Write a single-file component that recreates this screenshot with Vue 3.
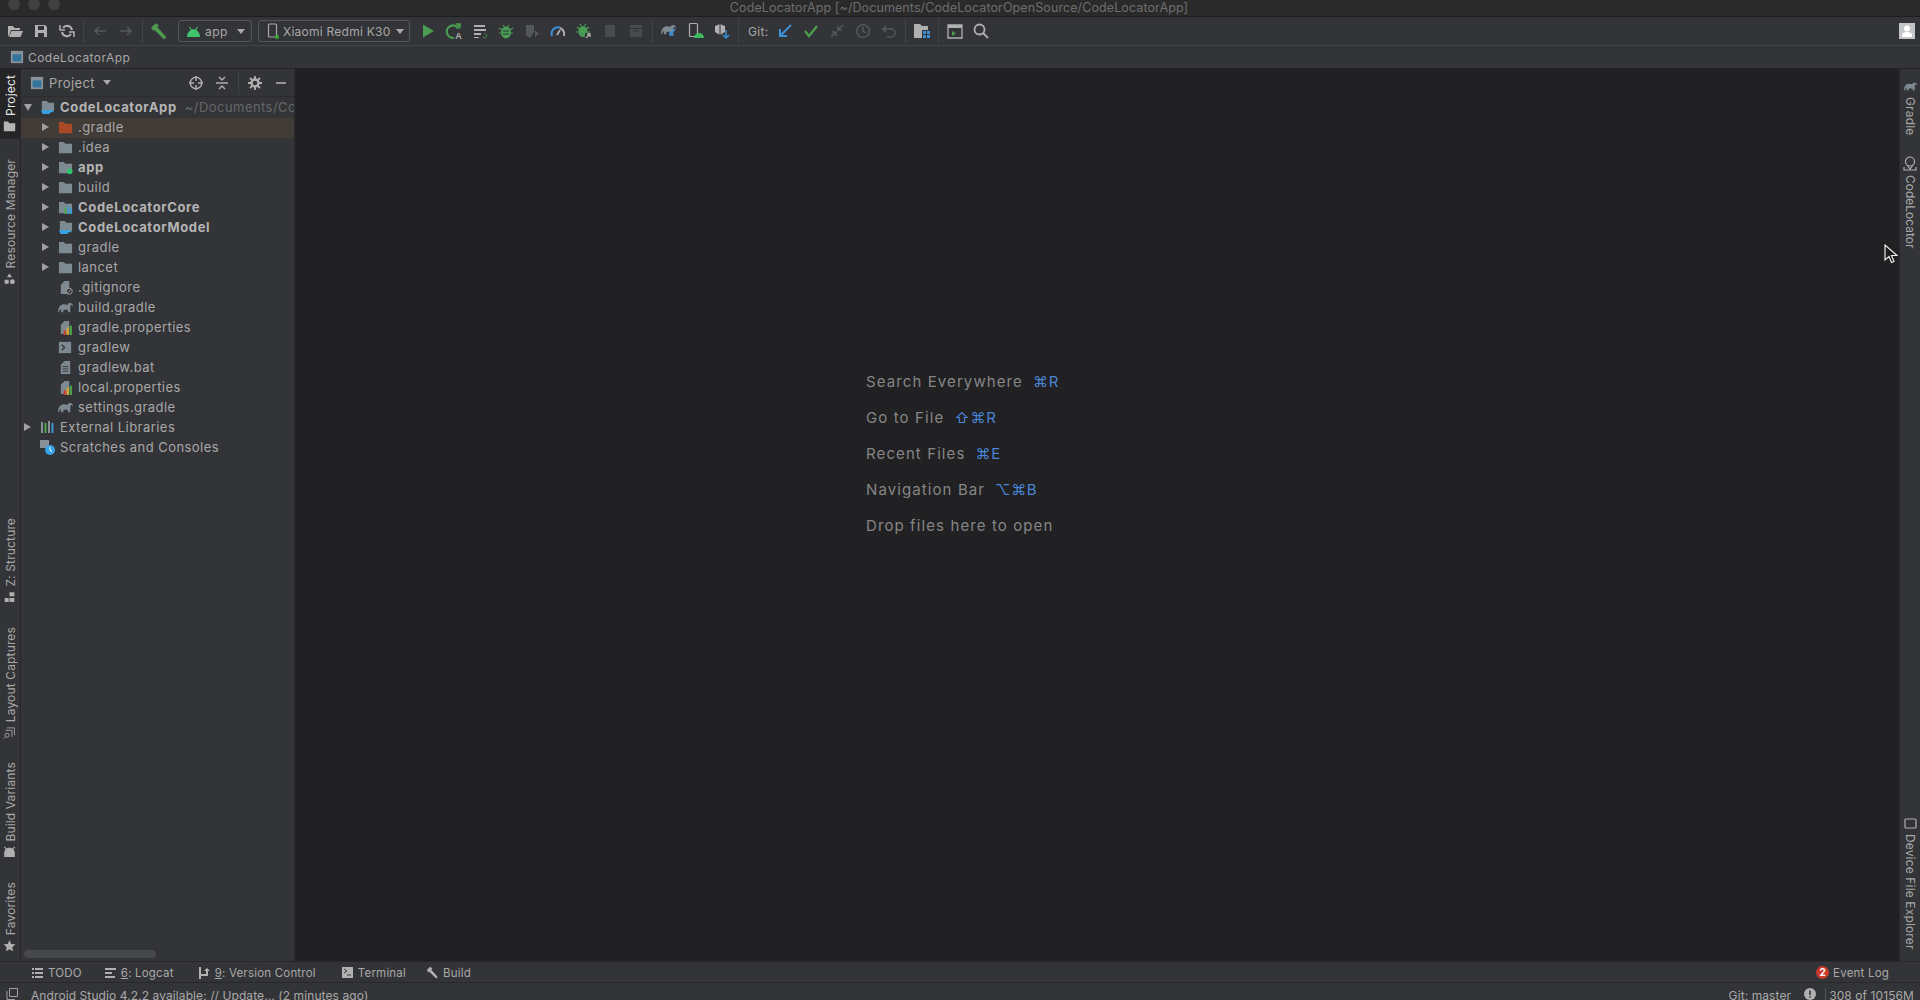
<script setup>
const tree = [
  { name: ".gradle", icon: "folder-red", arrow: true, selected: true },
  { name: ".idea", icon: "folder", arrow: true },
  { name: "app", icon: "folder-app", arrow: true, bold: true },
  { name: "build", icon: "folder", arrow: true },
  { name: "CodeLocatorCore", icon: "folder-bars", arrow: true, bold: true },
  { name: "CodeLocatorModel", icon: "folder-cup", arrow: true, bold: true },
  { name: "gradle", icon: "folder", arrow: true },
  { name: "lancet", icon: "folder", arrow: true },
  { name: ".gitignore", icon: "file-ignore" },
  { name: "build.gradle", icon: "elephant" },
  { name: "gradle.properties", icon: "file-bars" },
  { name: "gradlew", icon: "shell" },
  { name: "gradlew.bat", icon: "file-text" },
  { name: "local.properties", icon: "file-bars" },
  { name: "settings.gradle", icon: "elephant" },
];

const hints = [
  { label: "Search Everywhere", keys: "⌘R" },
  { label: "Go to File", keys: "⇧⌘R" },
  { label: "Recent Files", keys: "⌘E" },
  { label: "Navigation Bar", keys: "⌥⌘B" },
  { label: "Drop files here to open", keys: "" },
];

const leftTop = [
  { label: "Project", icon: "folder-plain", active: true },
  { label: "Resource Manager", icon: "shapes" },
];
const leftBottom = [
  { label: "Z: Structure", icon: "structure" },
  { label: "Layout Captures", icon: "captures" },
  { label: "Build Variants", icon: "android-side" },
  { label: "Favorites", icon: "star" },
];
</script>

<template>
  <div class="ide">
    <!-- icon sheet -->
    <svg class="sheet" width="0" height="0">
      <symbol id="folder" viewBox="0 0 16 16"><path d="M1 2h5l2 2h7v10H1z" fill="#7e8a92" /></symbol>
      <symbol id="folder-plain" viewBox="0 0 16 16"><path d="M1 2h5l2 2h7v10H1z" fill="#b5b5b5" /></symbol>
      <symbol id="folder-red" viewBox="0 0 16 16"><path d="M1 2h5l2 2h7v10H1z" fill="#a84a28" /></symbol>
      <symbol id="folder-app" viewBox="0 0 16 16"><path d="M1 2h5l2 2h7v10H1z" fill="#7e8a92" /><circle cx="12.500" cy="12" r="3" fill="#2fc46c" /></symbol>
      <symbol id="folder-bars" viewBox="0 0 16 16"><path d="M1 2h5l2 2h7v10H1z" fill="#7e8a92" /><path d="M7 8h2v7H7z" fill="#4fa84a" /><path d="M10 6h2v9h-2z" fill="#3d9ad6" /><path d="M13 9h2v6h-2z" fill="#3d9ad6" /></symbol>
      <symbol id="folder-cup" viewBox="0 0 16 16"><path d="M2 1h5l2 2h6v9H2z" fill="#7e8a92" /><path d="M1 11h10v2a2 2 0 0 1-2 2H4a2 2 0 0 1-2-2zM11 11h3v2h-3z" fill="#35a4e6" /></symbol>
      <symbol id="file-ignore" viewBox="0 0 16 16"><path d="M3 5l4-4h5v14H3z" fill="#7e8a92" /><circle cx="12" cy="12" r="3.200" fill="#333437" stroke="#a0a4a8" /><path d="M10 14l4-4" stroke="#a0a4a8" /></symbol>
      <symbol id="file-bars" viewBox="0 0 16 16"><path d="M3 5l4-4h5v14H3z" fill="#7e8a92" /><path d="M6 11h2.400v5H6z" fill="#c9402c" /><path d="M9.200 8h2.400v8H9.200z" fill="#d9a52c" /><path d="M12.400 6h2.400v10h-2.400z" fill="#4fa84a" /></symbol>
      <symbol id="file-text" viewBox="0 0 16 16"><path d="M3 5l4-4h6v14H3z" fill="#7e8a92" /><path d="M5 7h6M5 9.500h6M5 12h6" stroke="#333437" /></symbol>
      <symbol id="shell" viewBox="0 0 16 16"><path d="M1 2h13v12H1z" fill="#7e8a92" /><path d="M4 5l3 3-3 3" fill="none" stroke="#333437" stroke-width="1.400" /></symbol>
      <symbol id="elephant" viewBox="0 0 16 16"><path d="M0 12.500C0 9 1.500 6 4 5c2-.8 4-.6 6 .2 .8-1.700 2.500-2.400 4-1.700 1.500.6 2 1.800 2 2.700-.8 0-1.200-.8-1.700-.8-.6 0-1 .6-1 1.300L13 13h-2.200l-.5-2.500H6L5.500 13H3.300l-.2-3.500C2 10 1.500 11 1.500 12.500z" fill="#7e8a92" /></symbol>
      <symbol id="android-side" viewBox="0 0 16 16"><path d="M2 1l2.500 2.500C5 3.200 6.400 2.800 8 2.800s3 .4 3.500.7L14 1l1 1-2.300 2.500C14 6 14.500 7.800 14.500 9v5h-13V9c0-1.200.5-3 1.800-4.500L1 2z" fill="#b0b0b0" /></symbol>
      <symbol id="shapes" viewBox="0 0 16 16"><path d="M8 1l3 5H5z" fill="#b0b0b0" /><path d="M2 9h5v5H2z" fill="#b0b0b0" /><circle cx="11.500" cy="11.500" r="3" fill="#b0b0b0" /></symbol>
      <symbol id="structure" viewBox="0 0 16 16"><path d="M8 2h6v5H8zM2 9h5v5H2zM8 9h6v5H8z" fill="#b0b0b0" /></symbol>
      <symbol id="captures" viewBox="0 0 16 16"><path d="M5 2h9v9M3 5h8v8" fill="none" stroke="#b0b0b0" /><circle cx="5" cy="11" r="2.500" fill="#333437" stroke="#b0b0b0" /><path d="M3 13l-2 2" stroke="#b0b0b0" /></symbol>
      <symbol id="star" viewBox="0 0 16 16"><path d="M8 1l2.100 4.800 5.200.5-3.900 3.500 1.100 5.100L8 12.300l-4.500 2.600 1.100-5.100L.7 6.300l5.200-.5z" fill="#b0b0b0" /></symbol>
      <symbol id="module" viewBox="0 0 16 16"><path d="M1 1h14v14H1z" fill="#8a9299" /><path d="M3 5h10v8H3z" fill="#31739c" /></symbol>
    </svg>

    <div class="titlebar">
      <span class="lights"><i></i><i></i><i></i></span>
      <span class="title">CodeLocatorApp [~/Documents/CodeLocatorOpenSource/CodeLocatorApp]</span>
    </div>

    <div class="toolbar">
      <span class="tool"><svg width="16" height="16" viewBox="0 0 16 16"><path d="M1 3h5l1.500 2H13v2H4l-2 6H1zM4.500 8H16l-2.500 6H2z" fill="#b0b0b0" /></svg></span>
      <span class="tool"><svg width="16" height="16" viewBox="0 0 16 16"><path d="M2 2h10l2 2v10H2z" fill="#b0b0b0" /><path d="M5 3h6v4H5zM5 10h6v4H5z" fill="#333437" /></svg></span>
      <span class="tool"><svg width="16" height="16" viewBox="0 0 16 16" fill="none" stroke="#b0b0b0" stroke-width="2"><path d="M13 7a5 5 0 0 0-9-2M3 9a5 5 0 0 0 9 2" /><path d="M1 2v5h5M15 14V9h-5" stroke-width="1.500" /></svg></span>
      <span class="sep"></span>
      <span class="tool"><svg width="16" height="16" viewBox="0 0 16 16" fill="none" stroke="#55575a" stroke-width="1.500"><path d="M14 8H3M7 4L3 8l4 4" /></svg></span>
      <span class="tool"><svg width="16" height="16" viewBox="0 0 16 16" fill="none" stroke="#55575a" stroke-width="1.500"><path d="M2 8h11M9 4l4 4-4 4" /></svg></span>
      <span class="sep"></span>
      <span class="tool"><svg width="18" height="18" viewBox="0 0 16 16"><path d="M1 5l4-4 3 2-1.500 1.500 8 9-2 2-8.500-8.500L3 8z" fill="#4e9a4e" /></svg></span>
      <span class="combo combo-app">
        <svg width="15" height="12" viewBox="0 0 15 12"><path d="M1 12c0-3.500 2-6 3.800-7L3 2l.8-.5L5.700 4.500c1.200-.5 2.400-.5 3.600 0L11.200 1.500l.8.5-1.800 3C12 6 14 8.500 14 12z" fill="#3fc46c" /></svg>
        app <i class="caret"></i>
      </span>
      <span class="combo combo-device">
        <svg width="14" height="16" viewBox="0 0 14 16"><rect x="2.500" y="1" width="8" height="13" rx="1" fill="none" stroke="#a8a8a8" stroke-width="1.200" /><circle cx="11" cy="14" r="2" fill="#3aa53a" /></svg>
        Xiaomi Redmi K30 <i class="caret"></i>
      </span>
      <span class="tool first"><svg width="16" height="16" viewBox="0 0 16 16"><path d="M3 1.500l11 6.500-11 6.500z" fill="#4b9c50" /></svg></span>
      <span class="tool"><svg width="18" height="18" viewBox="0 0 16 16"><path d="M12 6a5.500 5.500 0 1 0-4 8" fill="none" stroke="#4b9c50" stroke-width="2" /><path d="M9 1h5v5z" fill="#4b9c50" /><text x="9" y="15" font-size="8" font-weight="700" fill="#b0b0b0" font-family="Liberation Sans">A</text></svg></span>
      <span class="tool"><svg width="16" height="16" viewBox="0 0 16 16"><path d="M2 2h11v2H2zM2 6h12v2H2zM2 10h7v2H2zM2 14h5v1H2z" fill="#b0b0b0" /><path d="M11 14a2 2 0 1 0 2-3" fill="none" stroke="#4b9c50" /></svg></span>
      <span class="tool"><svg width="16" height="16" viewBox="0 0 16 16"><ellipse cx="8" cy="9.500" rx="5" ry="6" fill="#499c54" /><path d="M1 5l3 2M15 5l-3 2M1 10h3M15 10h-3M5 2l1.500 2M11 2L9.500 4" stroke="#499c54" stroke-width="1.200" /><path d="M5 8h6M5 11h6" stroke="#333437" /></svg></span>
      <span class="tool"><svg width="16" height="16" viewBox="0 0 16 16"><path d="M2 2h8v7l-4 6-4-3z" fill="#55575a" /><path d="M11 7l4 3.500-4 3.500z" fill="#55575a" /></svg></span>
      <span class="tool"><svg width="16" height="16" viewBox="0 0 16 16" fill="none"><path d="M2 13a6.500 6.500 0 0 1 8-8.500" stroke="#3d8fd6" stroke-width="2" /><path d="M10 5a6.500 6.500 0 0 1 4 8" stroke="#b0b0b0" stroke-width="2" /><path d="M7 12l3-5" stroke="#b0b0b0" stroke-width="1.800" /></svg></span>
      <span class="tool"><svg width="16" height="16" viewBox="0 0 16 16"><ellipse cx="7" cy="8.500" rx="4.500" ry="5.500" fill="#499c54" /><path d="M1 4l2.500 2M13 4l-2.500 2M0 9h3M11 9h3M4 1l1.500 2M10 1L8.500 3" stroke="#499c54" stroke-width="1.200" /><path d="M9 10h7v6H9z" fill="#333437" /><path d="M10 15l4-4M11 11h3v3" fill="none" stroke="#b0b0b0" stroke-width="1.300" /></svg></span>
      <span class="tool"><svg width="16" height="16" viewBox="0 0 16 16"><path d="M3 2h10v12H3z" fill="#4a4b4e" /></svg></span>
      <span class="tool"><svg width="16" height="16" viewBox="0 0 16 16"><path d="M2 2h12v3H2zM2 6h12v8H2z" fill="#4a4b4e" /><path d="M5 8h6" stroke="#333437" /></svg></span>
      <span class="sep wide"></span>
      <span class="tool"><svg width="18" height="18" viewBox="0 0 18 18"><svg width="15" height="15" viewBox="0 0 16 16"><use href="#elephant" width="16" height="16" /></svg><path d="M14 7l-5 6M9 9v4h4" fill="none" stroke="#3d8fd6" stroke-width="1.600" /></svg></span>
      <span class="tool"><svg width="18" height="18" viewBox="0 0 18 18"><rect x="2.500" y="1.500" width="8" height="13" rx="1" fill="none" stroke="#b0b0b0" stroke-width="1.200" /><path d="M7 16a5 5 0 0 1 10 0z" fill="#3dbb5e" /></svg></span>
      <span class="tool"><svg width="18" height="18" viewBox="0 0 18 18"><path d="M2 4l5-2 5 2v6l-5 3-5-3z" fill="#b0b0b0" /><path d="M7 2v11" stroke="#333437" /><path d="M13 8v8M10 13l3 3 3-3" fill="none" stroke="#3d8fd6" stroke-width="1.500" /></svg></span>
      <span class="sep"></span>
      <span class="git">Git:</span>
      <span class="tool"><svg width="16" height="16" viewBox="0 0 16 16" fill="none" stroke="#3d8fd6" stroke-width="2"><path d="M14 2L4 12M3 6v7h7" /></svg></span>
      <span class="tool"><svg width="16" height="16" viewBox="0 0 16 16" fill="none" stroke="#4b9c50" stroke-width="2.400"><path d="M2 8l4 5 8-10" /></svg></span>
      <span class="tool"><svg width="16" height="16" viewBox="0 0 16 16" fill="none" stroke="#55575a" stroke-width="1.600"><path d="M14 2L9 7M9 3v4h4M2 14l5-5M3 9h4v4" /></svg></span>
      <span class="tool"><svg width="16" height="16" viewBox="0 0 16 16" fill="none" stroke="#55575a" stroke-width="1.500"><circle cx="8" cy="8" r="6.300" /><path d="M8 4v4l3 2" /></svg></span>
      <span class="tool"><svg width="16" height="16" viewBox="0 0 16 16" fill="none" stroke="#55575a" stroke-width="1.500"><path d="M5 3L2 6l3 3M2 6h8a4 4 0 0 1 0 8H6" /></svg></span>
      <span class="sep"></span>
      <span class="tool"><svg width="18" height="18" viewBox="0 0 18 18"><path d="M1 2h6l2 2h6v4H9v8H1z" fill="#b0b0b0" /><path d="M10 9h3v3h-3zM14 9h3v3h-3zM10 13h3v3h-3zM14 13h3v3h-3z" fill="#3d8fd6" /></svg></span>
      <span class="sep"></span>
      <span class="tool"><svg width="16" height="16" viewBox="0 0 16 16"><path d="M1 2h14v13H1z" fill="none" stroke="#b0b0b0" stroke-width="1.300" /><path d="M1 2h14v3H1z" fill="#b0b0b0" /><path d="M5 8l4 2.500L5 13z" fill="#4b9c50" /></svg></span>
      <span class="tool"><svg width="16" height="16" viewBox="0 0 16 16" fill="none" stroke="#b0b0b0" stroke-width="1.800"><circle cx="6.500" cy="6.500" r="5" /><path d="M10 10l5 5" /></svg></span>
      <span class="avatar">
        <svg width="16" height="16" viewBox="0 0 16 16"><rect width="16" height="16" fill="#c4c5c7" /><circle cx="8" cy="5.500" r="3" fill="#fff" /><path d="M3 14v-2c0-2 2-3 5-3s5 1 5 3v2z" fill="#fff" /></svg>
      </span>
    </div>

    <div class="navbar">
      <svg width="14" height="14"><use href="#module" /></svg>
      <span>CodeLocatorApp</span>
    </div>

    <div class="workspace">
      <aside class="stripe stripe-left">
        <div v-for="item in leftTop" :key="item.label" class="stripe-item" :class="{ active: item.active }">
          <span>{{ item.label }}</span>
          <svg width="13" height="13"><use :href="'#' + item.icon" /></svg>
        </div>
        <div class="stripe-bottom">
          <div v-for="item in leftBottom" :key="item.label" class="stripe-item">
            <span>{{ item.label }}</span>
            <svg class="grey" width="13" height="13"><use :href="'#' + item.icon" /></svg>
          </div>
        </div>
      </aside>

      <section class="project">
        <header class="project-head">
          <svg width="14" height="14"><use href="#module" /></svg>
          <span class="project-title">Project</span>
          <i class="caret"></i>
          <span class="head-tools">
            <svg width="14" height="14" viewBox="0 0 14 14" fill="none" stroke="#b0b0b0" stroke-width="1.400"><circle cx="7" cy="7" r="5.800" /><path d="M7 0v5M7 9v5M0 7h5M9 7h5" /></svg>
            <svg width="14" height="14" viewBox="0 0 14 14" fill="none" stroke="#b0b0b0" stroke-width="1.400"><path d="M1 7h12M4 1l3 3 3-3M4 13l3-3 3 3" /></svg>
            <b class="head-sep"></b>
            <svg width="14" height="14" viewBox="0 0 14 14"><circle cx="7" cy="7" r="3.500" fill="none" stroke="#b0b0b0" stroke-width="2.400" /><path d="M7 0v3M7 11v3M0 7h3M11 7h3M2 2l2 2M10 10l2 2M12 2l-2 2M4 10l-2 2" stroke="#b0b0b0" stroke-width="1.800" /></svg>
            <svg width="14" height="14" viewBox="0 0 14 14"><path d="M2 7h10" stroke="#b0b0b0" stroke-width="1.600" /></svg>
          </span>
        </header>

        <div class="tree">
          <div class="row root">
            <i class="tri down"></i>
            <svg class="ico" width="15" height="15"><use href="#folder-cup" /></svg>
            <b>CodeLocatorApp</b>
            <em>~/Documents/Co</em>
          </div>
          <div v-for="node in tree" :key="node.name" class="row child" :class="{ selected: node.selected }">
            <i class="tri" :class="{ none: !node.arrow }"></i>
            <svg class="ico" width="15" height="15"><use :href="'#' + node.icon" /></svg>
            <b v-if="node.bold">{{ node.name }}</b>
            <span v-else>{{ node.name }}</span>
          </div>
          <div class="row root">
            <i class="tri"></i>
            <svg class="ico" width="15" height="15" viewBox="0 0 15 15"><path d="M1 2h2v11H1z" fill="#8a9299" /><path d="M4.500 3h2v10h-2z" fill="#4fa84a" /><path d="M8 1h2v12H8z" fill="#8a9299" /><path d="M11.500 3h2v10h-2z" fill="#3d9ad6" /></svg>
            <span>External Libraries</span>
          </div>
          <div class="row root">
            <i class="tri none"></i>
            <svg class="ico" width="15" height="15" viewBox="0 0 15 15"><path d="M0 0h9v8H0z" fill="#8a9299" /><circle cx="10" cy="10" r="5" fill="#35a4e6" /><path d="M10 7v3l2 2" fill="none" stroke="#fff" /></svg>
            <span>Scratches and Consoles</span>
          </div>
        </div>

        <div class="hscroll"><div class="thumb"></div></div>
      </section>

      <main class="editor">
        <div class="hints">
          <p v-for="hint in hints" :key="hint.label">
            {{ hint.label }}<kbd v-if="hint.keys">{{ hint.keys }}</kbd>
          </p>
        </div>
      </main>

      <aside class="stripe stripe-right">
        <div class="side-item">
          <svg width="13" height="13" viewBox="0 0 16 16"><use href="#elephant" width="16" height="16" /></svg>
          <span>Gradle</span>
        </div>
        <div class="side-item codeloc">
          <svg width="14" height="15" viewBox="0 0 14 15" fill="none" stroke="#b0b0b0" stroke-width="1.200"><circle cx="7" cy="5.500" r="4.500" /><path d="M4 9l3 4 3-4" /><path d="M1 11v3h12v-3" /></svg>
          <span>CodeLocator</span>
        </div>
        <div class="side-item device">
          <svg width="13" height="13" viewBox="0 0 13 13" fill="none" stroke="#b0b0b0" stroke-width="1.200"><rect x="1" y="2" width="11" height="9" rx="1" /></svg>
          <span>Device File Explorer</span>
        </div>
      </aside>
    </div>

    <footer class="toolwindows">
      <span class="tw"><svg width="11" height="11" viewBox="0 0 11 11"><path d="M0 1h2v2H0zM0 5h2v2H0zM0 9h2v2H0zM3 1h8v2H3zM3 5h8v2H3zM3 9h8v2H3z" fill="#b0b0b0" /></svg>TODO</span>
      <span class="tw logcat"><svg width="11" height="11" viewBox="0 0 11 11"><path d="M0 1h11v2H0zM0 5h7v2H0zM0 9h10v2H0z" fill="#b0b0b0" /></svg><span><u>6</u>: Logcat</span></span>
      <span class="tw vcs"><svg width="11" height="12" viewBox="0 0 11 12"><path d="M0 0h2v12H0zM2 7h5V4H5l3-3 3 3H9v5H2z" fill="#b0b0b0" /></svg><span><u>9</u>: Version Control</span></span>
      <span class="tw term"><svg width="11" height="11" viewBox="0 0 11 11"><path d="M0 0h11v11H0z" fill="#b0b0b0" /><path d="M2 2l3 2-3 2M5 8h4" fill="none" stroke="#333437" /></svg>Terminal</span>
      <span class="tw build"><svg width="13" height="13" viewBox="0 0 16 16"><path d="M1 5l4-4 3 2-1.500 1.500 8 9-2 2-8.500-8.500L3 8z" fill="#b0b0b0" /></svg>Build</span>
      <span class="tw eventlog"><i class="badge">2</i>Event Log</span>
    </footer>

    <div class="statusbar">
      <svg width="12" height="12" viewBox="0 0 12 12" fill="none" stroke="#a0a0a0"><path d="M3.500 .5h8v8h-8zM1 3v8.500h8" /></svg>
      <span class="status-msg">Android Studio 4.2.2 available: // Update... (2 minutes ago)</span>
      <span class="status-git">Git: master</span>
      <svg class="warn" width="12" height="12" viewBox="0 0 12 12"><circle cx="6" cy="6" r="6" fill="#b0b0b0" /><path d="M6 2.500v4.500M6 8.200v1.500" stroke="#333437" stroke-width="1.600" /></svg>
      <span class="status-mem">308 of 10156M</span>
    </div>

    <svg class="cursor" width="14" height="20" viewBox="0 0 14 20"><path d="M1 1v15l4-3.500 2.500 6 2.500-1-2.500-6H13z" fill="#1c1c1c" stroke="#e8e8e8" stroke-width="1.200" /></svg>
  </div>
</template>

<style>
html,
body {
  margin: 0;
  background: #333437;
}
</style>

<style scoped>
.ide {
  position: relative;
  width: 1920px;
  height: 1000px;
  overflow: hidden;
  display: flex;
  flex-direction: column;
  background: #333437;
  color: #a8a8a8;
  font-family: Inter, "Noto Sans", sans-serif;
  font-size: 13px;
}

.sheet {
  position: absolute;
}

.titlebar {
  height: 17px;
  flex: none;
  position: relative;
  background: #2a2a2b;
  border-bottom: 1px solid #1e1e1f;
  box-sizing: border-box;
  display: flex;
  justify-content: center;
  overflow: hidden;
}

.title {
  font-size: 12.5px;
  line-height: 15px;
  letter-spacing: 0.1px;
  color: #6e6e70;
  padding-right: 2px;
}

.lights {
  position: absolute;
  left: 8px;
  top: -2px;
  display: flex;
  gap: 8px;
}

.lights i {
  width: 12px;
  height: 12px;
  border-radius: 50%;
  background: #414143;
}

.toolbar {
  height: 29px;
  flex: none;
  box-sizing: border-box;
  border-bottom: 1px solid #424346;
  display: flex;
  align-items: center;
  padding-left: 2px;
}

.tool {
  width: 26px;
  height: 24px;
  flex: none;
  display: flex;
  align-items: center;
  justify-content: center;
}

.tool.first {
  margin-left: 5px;
}

.sep {
  width: 1px;
  height: 24px;
  margin: 0 3px;
  background: #424346;
  flex: none;
}

.sep.wide {
  margin-right: 4px;
}

.combo {
  height: 22px;
  box-sizing: border-box;
  border: 1px solid #55565a;
  border-radius: 3px;
  display: flex;
  align-items: center;
  flex: none;
  font-size: 12px;
  letter-spacing: 0.45px;
  color: #a8a8a8;
  white-space: nowrap;
}

.combo svg {
  flex: none;
}

.combo-app {
  width: 74px;
  margin-left: 6px;
  padding-left: 7px;
  gap: 4px;
}

.combo-device {
  width: 152px;
  margin-left: 6px;
  padding-left: 7px;
  gap: 3px;
  letter-spacing: 0.25px;
}

.caret {
  width: 0;
  height: 0;
  flex: none;
  margin-left: 5px;
  border-left: 4px solid transparent;
  border-right: 4px solid transparent;
  border-top: 5px solid #a8a8a8;
}

.combo-device .caret {
  margin-left: 2px;
}

.project-head .caret {
  margin-left: 8px;
}

.git {
  font-size: 12px;
  margin: 0 4px 0 6px;
  letter-spacing: 0.3px;
}

.avatar {
  margin-left: auto;
  margin-right: 5px;
  height: 16px;
}

.navbar {
  height: 23px;
  flex: none;
  box-sizing: border-box;
  padding-left: 10px;
  border-bottom: 1px solid #252527;
  display: flex;
  align-items: center;
  gap: 4px;
  font-size: 12px;
  letter-spacing: 0.45px;
}

.workspace {
  flex: 1;
  min-height: 0;
  display: flex;
}

.stripe {
  width: 21px;
  flex: none;
  display: flex;
  flex-direction: column;
  box-sizing: border-box;
  font-size: 12px;
}

.stripe-left {
  border-right: 1px solid #28282a;
  padding-bottom: 9px;
}

.stripe-item {
  writing-mode: vertical-rl;
  transform: rotate(180deg);
  flex: none;
  display: flex;
  align-items: center;
  flex-direction: row-reverse;
  justify-content: flex-end;
  gap: 4px;
  letter-spacing: 0.15px;
  white-space: nowrap;
  width: 20px;
}

.stripe-item + .stripe-item {
  margin-top: 23px;
}

.stripe-item svg {
  transform: rotate(180deg);
  flex: none;
}

.stripe-item.active {
  background: #252527;
  color: #e6e6e6;
  padding: 6px 0;
}

.stripe-item.active + .stripe-item {
  margin-top: 20px;
}

.stripe-bottom {
  margin-top: auto;
  display: flex;
  flex-direction: column;
}

.project {
  width: 274px;
  flex: none;
  display: flex;
  flex-direction: column;
  border-right: 1px solid #2c2c2e;
  box-sizing: border-box;
}

.project-head {
  height: 28px;
  flex: none;
  box-sizing: border-box;
  border-bottom: 1px solid #2c2c2e;
  display: flex;
  align-items: center;
  padding-left: 9px;
  font-size: 13px;
}

.project-title {
  margin-left: 5px;
  letter-spacing: 0.4px;
}

.head-tools {
  margin-left: auto;
  margin-right: 6px;
  display: flex;
  align-items: center;
  gap: 12px;
}

.head-sep {
  width: 1px;
  height: 22px;
  margin: 0 -3px;
  background: #424346;
}

.tree {
  flex: 1;
  min-height: 0;
  padding-top: 1px;
}

.row {
  height: 20px;
  box-sizing: border-box;
  padding-bottom: 2px;
  display: flex;
  align-items: center;
  white-space: nowrap;
  overflow: hidden;
  letter-spacing: 0.45px;
  font-size: 13px;
}

.row b {
  font-weight: 700;
  color: #b4b4b4;
  letter-spacing: 0.65px;
}

.row em {
  font-style: normal;
  color: #66676a;
  margin-left: 8px;
}

.root .tri {
  margin-left: 3px;
}

.child .tri {
  margin-left: 21px;
}

.row.selected {
  background: #413c37;
}

.tri {
  width: 0;
  height: 0;
  flex: none;
  border-top: 4.500px solid transparent;
  border-bottom: 4.500px solid transparent;
  border-left: 7px solid #a0a0a0;
  margin-right: 9px;
}

.tri.down {
  border-left: 4.500px solid transparent;
  border-right: 4.500px solid transparent;
  border-top: 7px solid #a0a0a0;
  border-bottom: 0;
  margin-right: 8px;
}

.tri.none {
  visibility: hidden;
}

.ico {
  flex: none;
  margin-right: 5px;
}

.hscroll {
  height: 12px;
  flex: none;
  padding: 1px 0 0 3px;
  box-sizing: border-box;
}

.thumb {
  width: 132px;
  height: 8px;
  border-radius: 4px;
  background: #47484b;
}

.editor {
  flex: 1;
  min-width: 0;
  background: #212022;
  padding: 298px 0 0 571px;
  box-sizing: border-box;
}

.hints p {
  margin: 0;
  height: 36px;
  line-height: 30px;
  font-size: 15px;
  letter-spacing: 1.1px;
  color: #868687;
  white-space: nowrap;
}

.hints kbd {
  font-family: inherit;
  color: #4a86d8;
  margin-left: 10px;
  letter-spacing: 0.7px;
}

.stripe-right {
  background: #333437;
  border-left: 1px solid #28282a;
  padding-top: 11px;
  align-items: center;
}

.side-item {
  writing-mode: vertical-rl;
  flex: none;
  display: flex;
  align-items: center;
  gap: 4px;
  letter-spacing: 0.15px;
  white-space: nowrap;
}

.codeloc {
  margin-top: 21px;
  letter-spacing: 0;
}

.device {
  margin-top: auto;
  margin-bottom: 11px;
}

.toolwindows {
  height: 22px;
  flex: none;
  box-sizing: border-box;
  border-top: 1px solid #28282a;
  border-bottom: 1px solid #28282a;
  display: flex;
  align-items: center;
  padding: 1px 0 0 32px;
  font-size: 11.5px;
  letter-spacing: 0.2px;
}

.tw {
  display: flex;
  align-items: center;
  gap: 5px;
  white-space: nowrap;
}

.logcat {
  margin-left: 23px;
}

.vcs {
  margin-left: 25px;
}

.term {
  margin-left: 26px;
}

.build {
  margin-left: 20px;
  gap: 4px;
}

.eventlog {
  margin-left: auto;
  margin-right: 31px;
  gap: 4px;
}

.badge {
  width: 13px;
  height: 13px;
  border-radius: 50%;
  background: #c8392e;
  color: #fff;
  font-style: normal;
  font-weight: 700;
  font-size: 10px;
  letter-spacing: 0;
  line-height: 13px;
  text-align: center;
}

.statusbar {
  height: 17px;
  flex: none;
  display: flex;
  align-items: flex-start;
  padding: 5px 6px 0 6px;
  box-sizing: border-box;
  font-size: 12px;
  letter-spacing: 0.09px;
  white-space: nowrap;
}

.statusbar svg {
  flex: none;
}

.status-msg {
  margin-left: 13px;
  line-height: 15px;
}

.status-git {
  margin-left: auto;
  line-height: 15px;
}

.warn {
  margin-left: 13px;
}

.status-mem {
  margin-left: 9px;
  padding-left: 3px;
  border-left: 1px solid #55565a;
  line-height: 15px;
}

.cursor {
  position: absolute;
  left: 1884px;
  top: 244px;
}
</style>
